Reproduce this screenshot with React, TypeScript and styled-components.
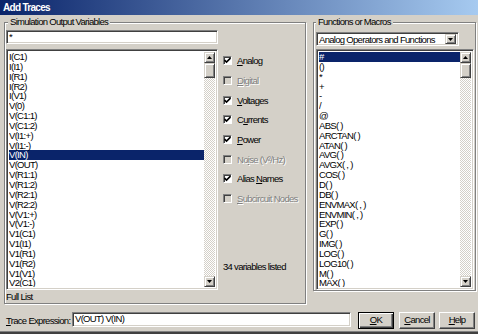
import React from "react";
import styled, { createGlobalStyle, css } from "styled-components";

const FACE = "#D4D0C8";
const SHADOW = "#808080";
const DARK = "#404040";
const SEL = "#0A246A";
const FONT = `"Liberation Sans", Arial, sans-serif`;

const Global = createGlobalStyle`
  html, body { margin: 0; padding: 0; background: ${FACE}; }
  body { font-family: ${FONT}; font-size: 10px; }
  * { box-sizing: border-box; }
`;

const Window = styled.div`
  width: 478px;
  height: 334px;
  background: ${FACE};
  display: flex;
  flex-direction: column;
  overflow: hidden;
  color: #000;
  font-family: ${FONT};
  font-size: 9.5px;
  letter-spacing: -0.7px;
`;

const TitleBar = styled.div`
  height: 15px;
  flex: none;
  background: linear-gradient(to right, #0a246a, #a6caf0);
  color: #fff;
  font-weight: bold;
  font-size: 10px;
  letter-spacing: -0.7px;
  line-height: 15px;
  padding-left: 3px;
  white-space: nowrap;
`;

const Body = styled.div`
  flex: 1;
  display: flex;
  flex-direction: column;
  padding-left: 4px;
`;

const Panels = styled.div`
  display: flex;
  gap: 7px;
  padding-top: 1px;
  height: 290px;
  align-items: flex-start;
`;

const Group = styled.fieldset<{ $w: number; $pl: number }>`
  margin: 0;
  min-width: 0;
  width: ${(p) => p.$w}px;
  padding: 2px 0 0 ${(p) => p.$pl}px;
  border: 1px solid ${SHADOW};
  box-shadow: inset 1px 1px 0 #fff, 1px 1px 0 #fff;
  display: flex;
`;

const Legend = styled.legend<{ $ml: number }>`
  font-size: 9.5px;
  line-height: 12px;
  padding: 0 2px;
  margin-left: ${(p) => p.$ml}px;
  background: ${FACE};
  position: relative;
`;

const GroupInner = styled.div`
  display: flex;
  width: 100%;
`;

const Column = styled.div<{ $w: number }>`
  width: ${(p) => p.$w}px;
  display: flex;
  flex-direction: column;
  flex: none;
`;

const sunken = css`
  border: 1px solid;
  border-color: ${SHADOW} #fff #fff ${SHADOW};
  box-shadow: inset 1px 1px 0 ${DARK}, inset -1px -1px 0 ${FACE};
`;

const raised = css`
  border: 1px solid;
  border-color: ${FACE} ${DARK} ${DARK} ${FACE};
  box-shadow: inset 1px 1px 0 #fff, inset -1px -1px 0 ${SHADOW};
  background: ${FACE};
`;

const TextField = styled.div<{ $w: number; $h: number; $mt?: number }>`
  ${sunken};
  width: ${(p) => p.$w}px;
  height: ${(p) => p.$h}px;
  margin-top: ${(p) => p.$mt ?? 0}px;
  background: #fff;
  padding: 0 2px;
  line-height: ${(p) => p.$h - 3}px;
  white-space: nowrap;
  overflow: hidden;
  flex: none;
`;

const ListBox = styled.div<{ $w: number; $mt: number }>`
  ${sunken};
  width: ${(p) => p.$w}px;
  height: 241px;
  margin-top: ${(p) => p.$mt}px;
  background: #fff;
  display: flex;
  padding: 2px;
  flex: none;
`;

const Items = styled.div`
  flex: 1;
  overflow: hidden;
`;

const Row = styled.div<{ $sel?: boolean }>`
  height: 9.85px;
  line-height: 10px;
  white-space: nowrap;
  padding-left: 0;
  background: ${(p) => (p.$sel ? SEL : "transparent")};
  color: ${(p) => (p.$sel ? "#fff" : "#000")};
`;

const ScrollBar = styled.div`
  width: 11px;
  display: flex;
  flex-direction: column;
  flex: none;
`;

const ScrollBtn = styled.div<{ $h: number }>`
  ${raised};
  width: 11px;
  height: ${(p) => p.$h}px;
  flex: none;
  display: flex;
  align-items: center;
  justify-content: center;
`;

const Track = styled.div`
  flex: 1;
  background: repeating-conic-gradient(#fff 0 25%, ${FACE} 0 50%) 0 0 / 2px 2px;
`;

const Arrow = ({ down }: { down?: boolean }) => (
  <svg width="5" height="3" viewBox="0 0 5 3">
    <polygon points={down ? "0,0 5,0 2.5,3" : "0,3 5,3 2.5,0"} fill="#000" />
  </svg>
);

const Caption = styled.div`
  height: 13px;
  line-height: 13px;
  flex: none;
`;

const CheckCol = styled.div`
  display: flex;
  flex-direction: column;
  margin-left: 5px;
  padding-top: 21px;
`;

const CheckRow = styled.div<{ $disabled?: boolean }>`
  height: 19.7px;
  display: flex;
  align-items: center;
  white-space: nowrap;
  color: ${(p) => (p.$disabled ? SHADOW : "#000")};
  text-shadow: ${(p) => (p.$disabled ? "1px 1px 0 #fff" : "none")};
`;

const Box = styled.span<{ $disabled?: boolean }>`
  width: 9px;
  height: 9px;
  flex: none;
  border: 1px solid;
  border-color: ${SHADOW} #fff #fff ${SHADOW};
  box-shadow: inset 1px 1px 0 ${DARK};
  background: ${(p) => (p.$disabled ? FACE : "#fff")};
  display: flex;
  align-items: center;
  justify-content: center;
  margin-right: 5px;
`;

const Status = styled.div`
  margin-top: 52px;
  line-height: 12px;
  white-space: nowrap;
`;

const ComboWrap = styled.div`
  ${sunken};
  width: 143px;
  height: 14px;
  margin-top: 2px;
  background: #fff;
  display: flex;
  align-items: flex-start;
  padding: 1px 2px 1px 1px;
  flex: none;
`;

const ComboText = styled.div`
  flex: 1;
  padding-left: 1px;
  line-height: 11px;
  white-space: nowrap;
`;

const ExprRow = styled.div`
  height: 26px;
  flex: none;
  display: flex;
  align-items: flex-start;
  padding: 7px 0 0 2px;
`;

const ExprLabel = styled.div`
  width: 66px;
  flex: none;
  line-height: 15px;
  margin-top: 1px;
  white-space: nowrap;
`;

const Button = styled.div<{ $default?: boolean; $ml: number }>`
  width: 36px;
  height: 17px;
  flex: none;
  margin-left: ${(p) => p.$ml}px;
  background: ${FACE};
  border: 1px solid;
  border-color: ${(p) => (p.$default ? "#000" : `#fff ${DARK} ${DARK} #fff`)};
  box-shadow: ${(p) =>
    p.$default
      ? `inset 1px 1px 0 #fff, inset -1px -1px 0 ${DARK}, inset -2px -2px 0 ${SHADOW}`
      : `inset -1px -1px 0 ${SHADOW}, inset 1px 1px 0 ${FACE}`};
  text-align: center;
  line-height: 14px;
`;

const BottomFrame = styled.div`
  height: 4px;
  flex: none;
  border-top: 1px solid ${SHADOW};
  background: ${DARK};
`;

const Check = () => (
  <svg width="7" height="7" viewBox="0 0 7 7">
    <path d="M0.5 3 L2.5 5 L6.5 1" stroke="#000" strokeWidth="1.6" fill="none" />
  </svg>
);

const variables = [
  "I(C1)", "I(I1)", "I(R1)", "I(R2)", "I(V1)", "V(0)", "V(C1:1)", "V(C1:2)",
  "V(I1:+)", "V(I1:-)", "V(IN)", "V(OUT)", "V(R1:1)", "V(R1:2)", "V(R2:1)",
  "V(R2:2)", "V(V1:+)", "V(V1:-)", "V1(C1)", "V1(I1)", "V1(R1)", "V1(R2)",
  "V1(V1)", "V2(C1)",
];

const functions = [
  "#", "()", "*", "+", "-", "/", "@", "ABS( )", "ARCTAN( )", "ATAN( )", "AVG( )",
  "AVGX( , )", "COS( )", "D( )", "DB( )", "ENVMAX( , )", "ENVMIN( , )", "EXP( )",
  "G( )", "IMG( )", "LOG( )", "LOG10( )", "M( )", "MAX( )",
];

type Opt = { pre: string; key: string; post: string; checked: boolean; disabled?: boolean };
const options: Opt[] = [
  { pre: "", key: "A", post: "nalog", checked: true },
  { pre: "", key: "D", post: "igital", checked: false, disabled: true },
  { pre: "", key: "V", post: "oltages", checked: true },
  { pre: "C", key: "u", post: "rrents", checked: true },
  { pre: "", key: "P", post: "ower", checked: true },
  { pre: "No", key: "i", post: "se (V²/Hz)", checked: false, disabled: true },
  { pre: "Alias ", key: "N", post: "ames", checked: true },
  { pre: "", key: "S", post: "ubcircuit Nodes", checked: false, disabled: true },
];

const Scroll = () => (
  <ScrollBar>
    <ScrollBtn $h={11}><Arrow /></ScrollBtn>
    <ScrollBtn $h={15} />
    <Track />
    <ScrollBtn $h={11}><Arrow down /></ScrollBtn>
  </ScrollBar>
);

export default function App() {
  return (
    <Window>
      <Global />
      <TitleBar>Add Traces</TitleBar>
      <Body>
        <Panels>
          <Group $w={302} $pl={1}>
            <Legend $ml={2}>Simulation Output Variables</Legend>
            <GroupInner>
              <Column $w={212}>
                <TextField $w={212} $h={14}>*</TextField>
                <ListBox $w={212} $mt={5}>
                  <Items>
                    {variables.map((v) => (
                      <Row key={v} $sel={v === "V(IN)"}>{v}</Row>
                    ))}
                  </Items>
                  <Scroll />
                </ListBox>
                <Caption>Full List</Caption>
              </Column>
              <CheckCol>
                {options.map((o) => (
                  <CheckRow key={o.key + o.post} $disabled={o.disabled}>
                    <Box $disabled={o.disabled}>{o.checked && <Check />}</Box>
                    <span>
                      {o.pre}
                      <u>{o.key}</u>
                      {o.post}
                    </span>
                  </CheckRow>
                ))}
                <Status>34 variables listed</Status>
              </CheckCol>
            </GroupInner>
          </Group>
          <Group $w={163} $pl={2}>
            <Legend $ml={0}>Functions or Macros</Legend>
            <Column $w={158}>
              <ComboWrap>
                <ComboText>Analog Operators and Functions</ComboText>
                <ScrollBtn $h={10}><Arrow down /></ScrollBtn>
              </ComboWrap>
              <ListBox $w={158} $mt={3}>
                <Items>
                  {functions.map((f, i) => (
                    <Row key={f} $sel={i === 0}>{f}</Row>
                  ))}
                </Items>
                <Scroll />
              </ListBox>
            </Column>
          </Group>
        </Panels>
        <ExprRow>
          <ExprLabel><u>T</u>race Expression:</ExprLabel>
          <TextField $w={279} $h={15}>V(OUT) V(IN)</TextField>
          <Button $default $ml={7}><u>O</u>K</Button>
          <Button $ml={5}><u>C</u>ancel</Button>
          <Button $ml={4}><u>H</u>elp</Button>
        </ExprRow>
      </Body>
      <BottomFrame />
    </Window>
  );
}
